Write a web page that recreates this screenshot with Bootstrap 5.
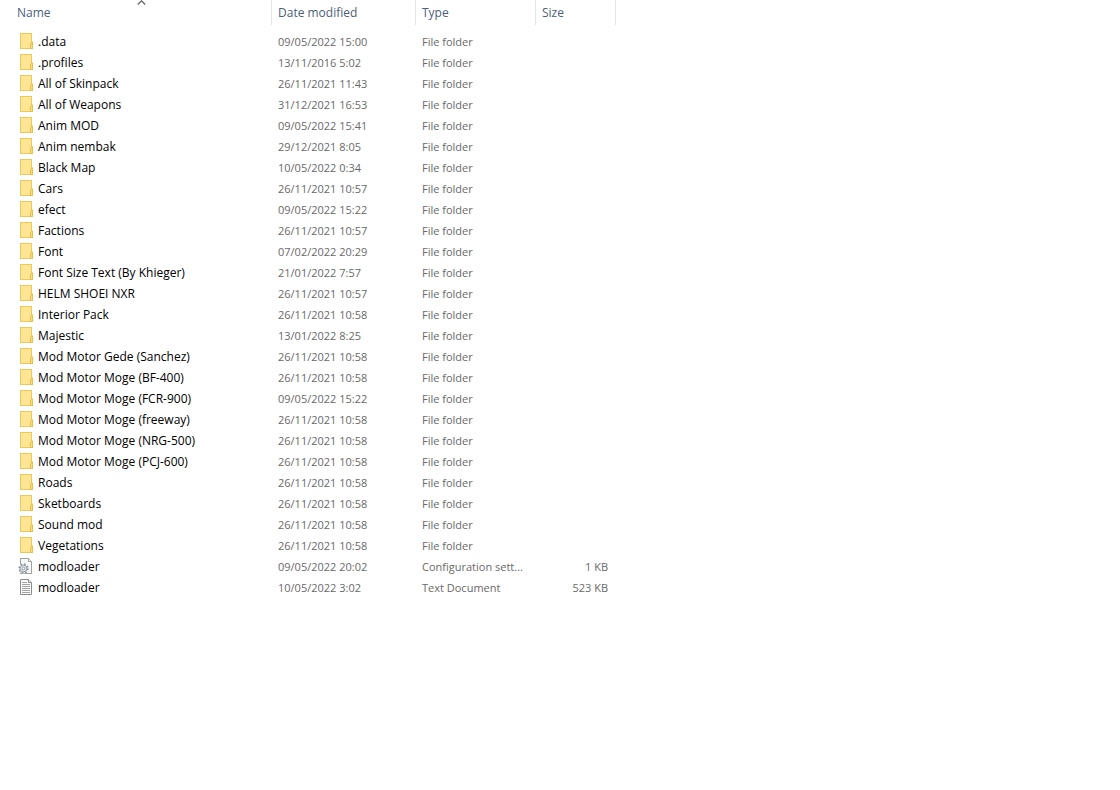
<!DOCTYPE html>
<html lang="en">
<head>
<meta charset="utf-8">
<meta name="viewport" content="width=device-width, initial-scale=1">
<title>modloader</title>
<link href="https://cdn.jsdelivr.net/npm/bootstrap@5.3.0/dist/css/bootstrap.min.css" rel="stylesheet">
<style>
body { font-family: "Open Sans", "Noto Sans", sans-serif; font-size: 12px; line-height: 21px; background: #fff; color: #000; }
.files { table-layout: fixed; width: 616px; }
.files th { height: 31px; padding: 0; font-weight: 400; vertical-align: top; }
.files td { height: 21px; padding: 0 8px 0 6px; white-space: nowrap; color: #696969; font-size: 11px; }
.files td:first-child { padding: 0 0 0 18px; color: #000; font-size: 12px; }
.files svg { display: block; flex: none; }
.files td svg { margin-top: 2px; }
.sorter { height: 25px; padding: 0 6px; border: 0; border-right: 1px solid #e5e5e5; background: none; color: #4c607a; }
th:first-child .sorter { padding-left: 17px; }
.sort-mark { left: 137px; top: 0; }
.c-name { width: 272px; } .c-date { width: 144px; } .c-type { width: 120px; } .c-size { width: 80px; }
</style>
</head>
<body>
<svg width="0" height="0" class="position-absolute" aria-hidden="true">
  <symbol id="folder" viewBox="0 0 16 16">
    <path d="M2 0H14V16H2z" fill="#edc95a"/>
    <path d="M3 1H13V15H3z" fill="#ffe594"/>
    <path d="M12 10.500L14 8.500H15V16H12z" fill="#e8c04b"/>
    <path d="M13 10.500L14 9.500V15H13z" fill="#fbdc7c"/>
  </symbol>
  <symbol id="config" viewBox="0 0 16 16">
    <path d="M2.500.5H10.500L13.500 3.500V15.500H2.500z" fill="#f8f8f8" stroke="#a0a0a0"/>
    <path d="M10.500.5V3.500H13.500" fill="#eee" stroke="#a0a0a0"/>
    <circle cx="5.500" cy="10.500" r="5" fill="#f8f8f8"/>
    <circle cx="5.500" cy="10.500" r="4.400" fill="none" stroke="#8f969c" stroke-width="1.600" stroke-dasharray="1.700 1.756"/>
    <circle cx="5.500" cy="10.500" r="3.400" fill="#dfe3e6" stroke="#8f969c" stroke-width=".9"/>
    <circle cx="5.500" cy="10.500" r="1.300" fill="#fff" stroke="#8f969c" stroke-width=".9"/>
  </symbol>
  <symbol id="textfile" viewBox="0 0 16 16">
    <path d="M2.500.5H10.500L13.500 3.500V15.500H2.500z" fill="#fafafa" stroke="#8c8c8c"/>
    <path d="M10.500.5V3.500H13.500" fill="#eee" stroke="#8c8c8c"/>
    <path d="M4 3.500H9M4 5.500H12M4 7.500H12M4 9.500H12M4 11.500H12M4 13.500H12" stroke="#a4a4a4"/>
  </symbol>
</svg>
<main>
<table class="files">
  <colgroup><col class="c-name"><col class="c-date"><col class="c-type"><col class="c-size"></colgroup>
  <thead>
    <tr>
      <th scope="col" aria-sort="ascending" class="position-relative"><button type="button" class="sorter w-100 text-start">Name</button><svg class="sort-mark position-absolute" width="9" height="5" viewBox="0 0 9 5" aria-hidden="true"><path d="M.8 4.500L4.500.8L8.200 4.500" fill="none" stroke="#606060" stroke-width="1.200"/></svg></th>
      <th scope="col"><button type="button" class="sorter w-100 text-start">Date modified</button></th>
      <th scope="col"><button type="button" class="sorter w-100 text-start">Type</button></th>
      <th scope="col"><button type="button" class="sorter w-100 text-start">Size</button></th>
    </tr>
  </thead>
  <tbody>
    <tr><td><div class="d-flex align-items-start gap-1"><svg width="16" height="16"><use href="#folder"/></svg>.data</div></td><td>09/05/2022 15:00</td><td>File folder</td><td></td></tr>
    <tr><td><div class="d-flex align-items-start gap-1"><svg width="16" height="16"><use href="#folder"/></svg>.profiles</div></td><td>13/11/2016 5:02</td><td>File folder</td><td></td></tr>
    <tr><td><div class="d-flex align-items-start gap-1"><svg width="16" height="16"><use href="#folder"/></svg>All of Skinpack</div></td><td>26/11/2021 11:43</td><td>File folder</td><td></td></tr>
    <tr><td><div class="d-flex align-items-start gap-1"><svg width="16" height="16"><use href="#folder"/></svg>All of Weapons</div></td><td>31/12/2021 16:53</td><td>File folder</td><td></td></tr>
    <tr><td><div class="d-flex align-items-start gap-1"><svg width="16" height="16"><use href="#folder"/></svg>Anim MOD</div></td><td>09/05/2022 15:41</td><td>File folder</td><td></td></tr>
    <tr><td><div class="d-flex align-items-start gap-1"><svg width="16" height="16"><use href="#folder"/></svg>Anim nembak</div></td><td>29/12/2021 8:05</td><td>File folder</td><td></td></tr>
    <tr><td><div class="d-flex align-items-start gap-1"><svg width="16" height="16"><use href="#folder"/></svg>Black Map</div></td><td>10/05/2022 0:34</td><td>File folder</td><td></td></tr>
    <tr><td><div class="d-flex align-items-start gap-1"><svg width="16" height="16"><use href="#folder"/></svg>Cars</div></td><td>26/11/2021 10:57</td><td>File folder</td><td></td></tr>
    <tr><td><div class="d-flex align-items-start gap-1"><svg width="16" height="16"><use href="#folder"/></svg>efect</div></td><td>09/05/2022 15:22</td><td>File folder</td><td></td></tr>
    <tr><td><div class="d-flex align-items-start gap-1"><svg width="16" height="16"><use href="#folder"/></svg>Factions</div></td><td>26/11/2021 10:57</td><td>File folder</td><td></td></tr>
    <tr><td><div class="d-flex align-items-start gap-1"><svg width="16" height="16"><use href="#folder"/></svg>Font</div></td><td>07/02/2022 20:29</td><td>File folder</td><td></td></tr>
    <tr><td><div class="d-flex align-items-start gap-1"><svg width="16" height="16"><use href="#folder"/></svg>Font Size Text (By Khieger)</div></td><td>21/01/2022 7:57</td><td>File folder</td><td></td></tr>
    <tr><td><div class="d-flex align-items-start gap-1"><svg width="16" height="16"><use href="#folder"/></svg>HELM SHOEI NXR</div></td><td>26/11/2021 10:57</td><td>File folder</td><td></td></tr>
    <tr><td><div class="d-flex align-items-start gap-1"><svg width="16" height="16"><use href="#folder"/></svg>Interior Pack</div></td><td>26/11/2021 10:58</td><td>File folder</td><td></td></tr>
    <tr><td><div class="d-flex align-items-start gap-1"><svg width="16" height="16"><use href="#folder"/></svg>Majestic</div></td><td>13/01/2022 8:25</td><td>File folder</td><td></td></tr>
    <tr><td><div class="d-flex align-items-start gap-1"><svg width="16" height="16"><use href="#folder"/></svg>Mod Motor Gede (Sanchez)</div></td><td>26/11/2021 10:58</td><td>File folder</td><td></td></tr>
    <tr><td><div class="d-flex align-items-start gap-1"><svg width="16" height="16"><use href="#folder"/></svg>Mod Motor Moge (BF-400)</div></td><td>26/11/2021 10:58</td><td>File folder</td><td></td></tr>
    <tr><td><div class="d-flex align-items-start gap-1"><svg width="16" height="16"><use href="#folder"/></svg>Mod Motor Moge (FCR-900)</div></td><td>09/05/2022 15:22</td><td>File folder</td><td></td></tr>
    <tr><td><div class="d-flex align-items-start gap-1"><svg width="16" height="16"><use href="#folder"/></svg>Mod Motor Moge (freeway)</div></td><td>26/11/2021 10:58</td><td>File folder</td><td></td></tr>
    <tr><td><div class="d-flex align-items-start gap-1"><svg width="16" height="16"><use href="#folder"/></svg>Mod Motor Moge (NRG-500)</div></td><td>26/11/2021 10:58</td><td>File folder</td><td></td></tr>
    <tr><td><div class="d-flex align-items-start gap-1"><svg width="16" height="16"><use href="#folder"/></svg>Mod Motor Moge (PCJ-600)</div></td><td>26/11/2021 10:58</td><td>File folder</td><td></td></tr>
    <tr><td><div class="d-flex align-items-start gap-1"><svg width="16" height="16"><use href="#folder"/></svg>Roads</div></td><td>26/11/2021 10:58</td><td>File folder</td><td></td></tr>
    <tr><td><div class="d-flex align-items-start gap-1"><svg width="16" height="16"><use href="#folder"/></svg>Sketboards</div></td><td>26/11/2021 10:58</td><td>File folder</td><td></td></tr>
    <tr><td><div class="d-flex align-items-start gap-1"><svg width="16" height="16"><use href="#folder"/></svg>Sound mod</div></td><td>26/11/2021 10:58</td><td>File folder</td><td></td></tr>
    <tr><td><div class="d-flex align-items-start gap-1"><svg width="16" height="16"><use href="#folder"/></svg>Vegetations</div></td><td>26/11/2021 10:58</td><td>File folder</td><td></td></tr>
    <tr><td><div class="d-flex align-items-start gap-1"><svg width="16" height="16"><use href="#config"/></svg>modloader</div></td><td>09/05/2022 20:02</td><td>Configuration sett...</td><td class="text-end">1 KB</td></tr>
    <tr><td><div class="d-flex align-items-start gap-1"><svg width="16" height="16"><use href="#textfile"/></svg>modloader</div></td><td>10/05/2022 3:02</td><td>Text Document</td><td class="text-end">523 KB</td></tr>
  </tbody>
</table>
</main>
<script src="https://cdn.jsdelivr.net/npm/bootstrap@5.3.0/dist/js/bootstrap.bundle.min.js"></script>
</body>
</html>
